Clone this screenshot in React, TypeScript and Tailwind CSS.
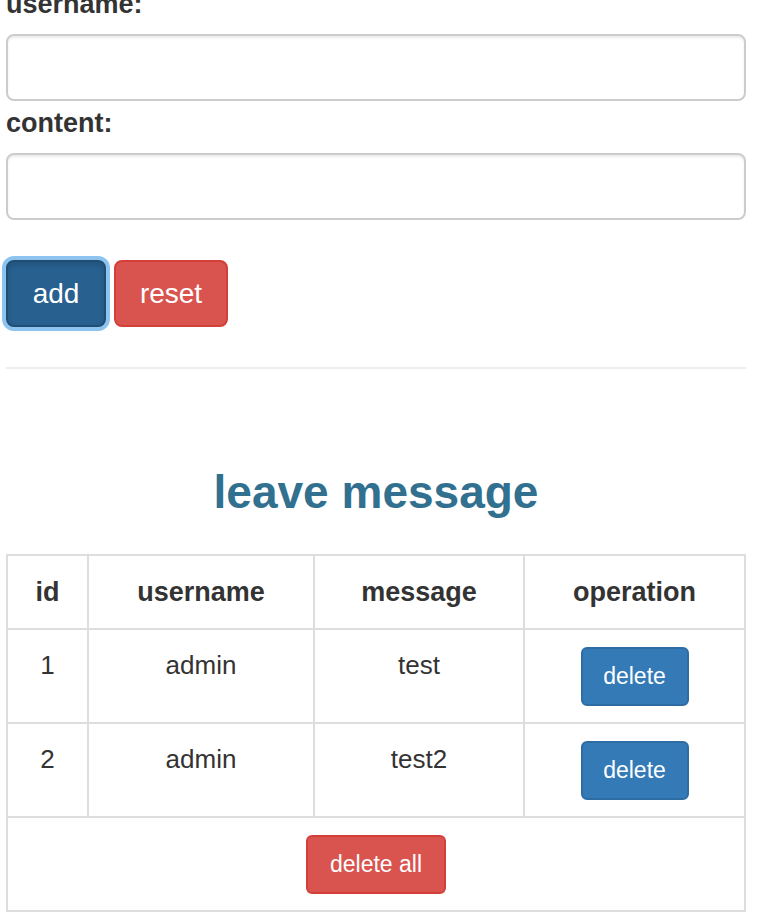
import { useState } from "react";

type Row = { id: number; username: string; message: string };

const initialRows: Row[] = [
  { id: 1, username: "admin", message: "test" },
  { id: 2, username: "admin", message: "test2" },
];

export default function App() {
  const [username, setUsername] = useState("");
  const [content, setContent] = useState("");
  const [rows, setRows] = useState<Row[]>(initialRows);

  const add = () => {
    if (!username || !content) return;
    const nextId = rows.length ? rows[rows.length - 1].id + 1 : 1;
    setRows([...rows, { id: nextId, username, message: content }]);
    setUsername("");
    setContent("");
  };

  const reset = () => {
    setUsername("");
    setContent("");
  };

  const th = "border-r-2 border-b-2 border-[#ddd] pt-[18px] pb-[17px] text-center align-top text-[27px] font-bold leading-[37px]";
  const td = "border-r-2 border-b-2 border-[#ddd] pt-[17px] pb-[16px] text-center align-top text-[26px] leading-[37px]";

  return (
    <div className="flex min-h-screen flex-col bg-white px-[6px] font-['Liberation_Sans',Arial,sans-serif] text-[#333]">
      <div className="-mt-[13px] flex w-[740px] flex-col">
        <label className="mb-[12px] block text-[27px] font-bold leading-[35px]">username:</label>
        <input
          className="h-[67px] w-full rounded-[8px] border-2 border-[#ccc] px-[22px] text-[26px] shadow-[inset_0_2px_2px_rgba(0,0,0,0.075)] outline-none"
          value={username}
          onChange={(e) => setUsername(e.target.value)}
        />
        <label className="mt-[5px] mb-[12px] block text-[27px] font-bold leading-[35px]">content:</label>
        <input
          className="h-[67px] w-full rounded-[8px] border-2 border-[#ccc] px-[22px] text-[26px] shadow-[inset_0_2px_2px_rgba(0,0,0,0.075)] outline-none"
          value={content}
          onChange={(e) => setContent(e.target.value)}
        />
        <div className="mt-[40px] flex gap-[8px]">
          <button
            type="button"
            onClick={add}
            className="h-[67px] w-[100px] rounded-[8px] border-2 border-[#204d74] bg-[#286090] text-[28px] text-white shadow-[inset_0_3px_5px_rgba(0,0,0,0.125),0_0_0_4px_rgba(102,175,233,0.75)]"
          >
            add
          </button>
          <button
            type="button"
            onClick={reset}
            className="h-[67px] w-[114px] rounded-[8px] border-2 border-[#d43f3a] bg-[#d9534f] text-[28px] text-white"
          >
            reset
          </button>
        </div>
        <hr className="mt-[40px] border-t-2 border-[#eee]" />
        <h2 className="mt-[97px] text-center text-[46px] font-bold leading-[53px] text-[#31708f]">leave message</h2>
        <table className="mt-[35px] w-full border-separate border-spacing-0 border-t-2 border-l-2 border-[#ddd]">
          <thead>
            <tr>
              <th className={`${th} w-[81px]`}>id</th>
              <th className={`${th} w-[226px]`}>username</th>
              <th className={`${th} w-[210px]`}>message</th>
              <th className={th}>operation</th>
            </tr>
          </thead>
          <tbody>
            {rows.map((r) => (
              <tr key={r.id}>
                <td className={td}>{r.id}</td>
                <td className={td}>{r.username}</td>
                <td className={td}>{r.message}</td>
                <td className={td}>
                  <button
                    type="button"
                    onClick={() => setRows(rows.filter((x) => x.id !== r.id))}
                    className="mx-auto block h-[59px] w-[108px] rounded-[6px] border-2 border-[#2e6da4] bg-[#337ab7] text-[23px] leading-none text-white"
                  >
                    delete
                  </button>
                </td>
              </tr>
            ))}
            <tr>
              <td colSpan={4} className="border-r-2 border-b-2 border-[#ddd] pt-[17px] pb-[16px] text-center align-top">
                <button
                  type="button"
                  onClick={() => setRows([])}
                  className="mx-auto block h-[59px] w-[140px] rounded-[6px] border-2 border-[#d43f3a] bg-[#d9534f] text-[23px] leading-none text-white"
                >
                  delete all
                </button>
              </td>
            </tr>
          </tbody>
        </table>
      </div>
    </div>
  );
}
